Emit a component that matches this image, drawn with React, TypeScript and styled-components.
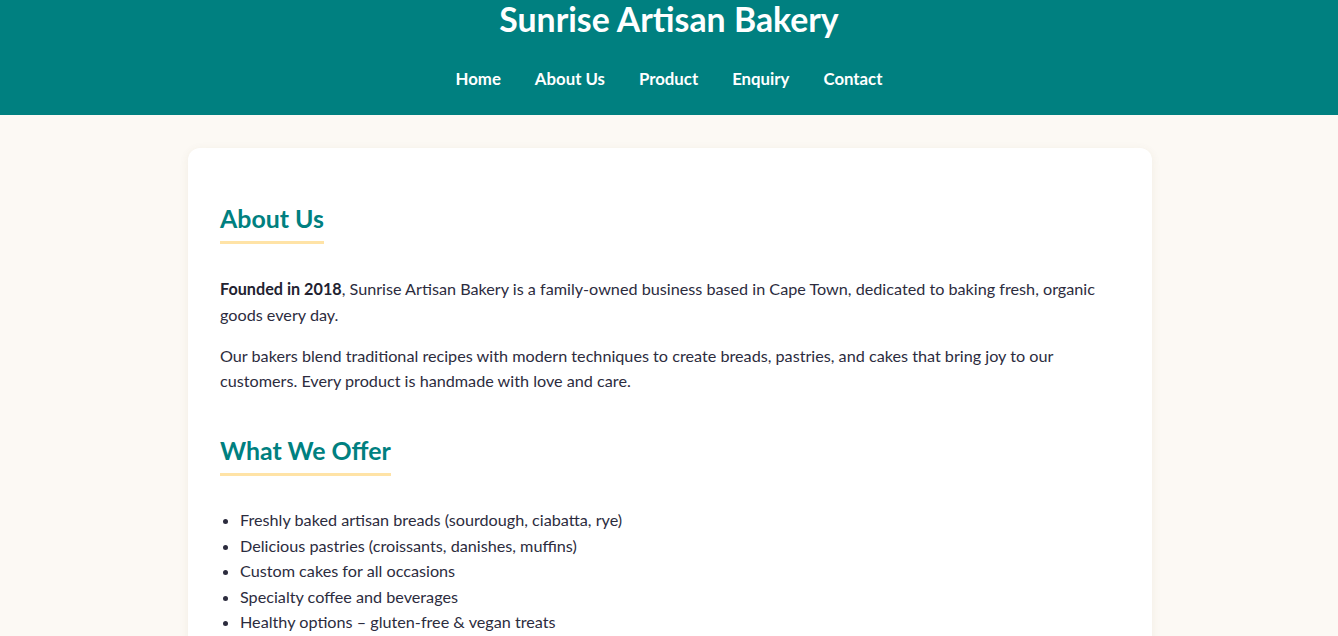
import React from "react";
import styled, { createGlobalStyle } from "styled-components";

const GlobalStyle = createGlobalStyle`
  html, body {
    margin: 0;
    padding: 0;
  }
  body {
    background: #fcf9f4;
    font-family: "Lato", "Segoe UI", "Roboto", sans-serif;
    color: #2c2c3e;
  }
  * { box-sizing: border-box; }
`;

const Header = styled.header`
  background: #008080;
  color: #ffffff;
  display: flex;
  flex-direction: column;
  align-items: center;
  padding: 0 0 26px;
`;

const Title = styled.h1`
  margin: 0;
  font-size: 33.8px;
  line-height: 38px;
  font-weight: 700;
`;

const Nav = styled.nav`
  margin-top: 31px;
  display: flex;
  justify-content: center;
  gap: 34px;
`;

const NavLink = styled.a`
  color: #ffffff;
  text-decoration: none;
  font-weight: 700;
  font-size: 16.8px;
  line-height: 20px;
  cursor: pointer;
`;

const Main = styled.main`
  padding: 33px 0 40px 2px;
`;

const Card = styled.article`
  max-width: 964px;
  margin: 0 auto;
  background: #ffffff;
  border-radius: 12px;
  box-shadow: 0 2px 10px rgba(120, 90, 40, 0.08);
  padding: 54.5px 32px 32px;
`;

const Section = styled.section`
  & + & {
    margin-top: 41px;
  }
`;

const Heading = styled.h2<{ $gap: number }>`
  width: fit-content;
  margin: 0 0 ${(p) => p.$gap}px;
  padding-bottom: 8.5px;
  border-bottom: 3px solid #ffe3a6;
  color: #008080;
  font-size: 24.9px;
  line-height: 30px;
  font-weight: 700;
`;

const Paragraph = styled.p`
  margin: 0;
  font-size: 16.2px;
  line-height: 25.6px;
  & + & {
    margin-top: 15.4px;
  }
  strong {
    font-weight: 700;
    color: #222230;
  }
`;

const List = styled.ul`
  margin: 0;
  padding-left: 20px;
`;

const Item = styled.li`
  font-size: 16.2px;
  line-height: 25.5px;
`;

const navItems = ["Home", "About Us", "Product", "Enquiry", "Contact"];
const offers = [
  "Freshly baked artisan breads (sourdough, ciabatta, rye)",
  "Delicious pastries (croissants, danishes, muffins)",
  "Custom cakes for all occasions",
  "Specialty coffee and beverages",
  "Healthy options – gluten-free & vegan treats",
];

export default function App() {
  return (
    <>
      <GlobalStyle />
      <Header>
        <Title>Sunrise Artisan Bakery</Title>
        <Nav>
          {navItems.map((n) => (
            <NavLink key={n} href="#">
              {n}
            </NavLink>
          ))}
        </Nav>
      </Header>
      <Main>
        <Card>
          <Section>
            <Heading $gap={32}>About Us</Heading>
            <Paragraph>
              <strong>Founded in 2018</strong>, Sunrise Artisan Bakery is a family-owned business based in Cape Town,
              dedicated to baking fresh, organic goods every day.
            </Paragraph>
            <Paragraph>
              Our bakers blend traditional recipes with modern techniques to create breads, pastries, and cakes that
              bring joy to our customers. Every product is handmade with love and care.
            </Paragraph>
          </Section>
          <Section>
            <Heading $gap={31}>What We Offer</Heading>
            <List>
              {offers.map((o) => (
                <Item key={o}>{o}</Item>
              ))}
            </List>
          </Section>
        </Card>
      </Main>
    </>
  );
}
